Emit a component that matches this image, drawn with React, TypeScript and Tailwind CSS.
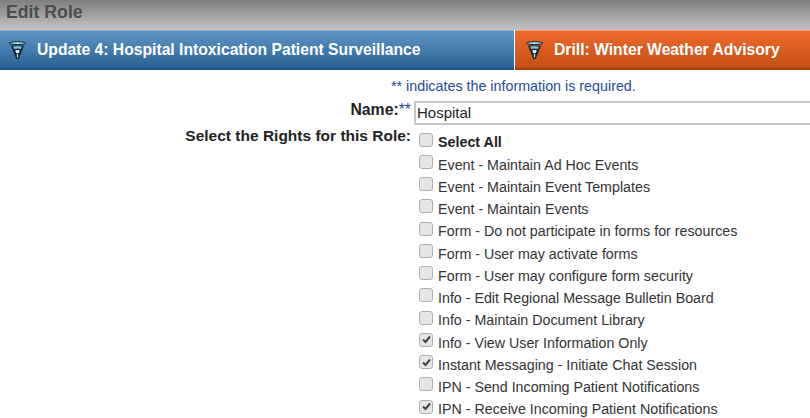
const rights = [
    { label: 'Event - Maintain Ad Hoc Events', checked: false },
    { label: 'Event - Maintain Event Templates', checked: false },
    { label: 'Event - Maintain Events', checked: false },
    { label: 'Form - Do not participate in forms for resources', checked: false },
    { label: 'Form - User may activate forms', checked: false },
    { label: 'Form - User may configure form security', checked: false },
    { label: 'Info - Edit Regional Message Bulletin Board', checked: false },
    { label: 'Info - Maintain Document Library', checked: false },
    { label: 'Info - View User Information Only', checked: true },
    { label: 'Instant Messaging - Initiate Chat Session', checked: true },
    { label: 'IPN - Send Incoming Patient Notifications', checked: false },
    { label: 'IPN - Receive Incoming Patient Notifications', checked: true },
];

function AlertIcon() {
    return (
        <svg width="19" height="20" viewBox="0 0 19 20" fill="none" className="shrink-0">
            <path d="M1 3.5 C4 1 15 1 18 3.5 C15 5 4 5 1 3.5Z" fill="#9fd6e6" stroke="#17242e" strokeWidth="1" />
            <path d="M3 5.5 L16 5.5 L11.5 17 L11 19 L8 19 L7.5 17Z" fill="#17242e" />
            <path d="M5 6.8 C7 6 12 6 14 6.8 L12.8 9 C11 8.2 8 8.2 6.2 9Z" fill="#7fc4d8" />
            <path d="M7.2 10.5 C8.5 9.9 10.5 9.9 11.8 10.5 L10.8 13 L8.2 13Z" fill="#d5eef5" />
            <path d="M9.5 13.5 V17.5" stroke="#9fd6e6" strokeWidth="1.4" />
        </svg>
    );
}

function Box({ checked }: { checked: boolean }) {
    return (
        <span className="w-[14px] h-[14px] shrink-0 mb-[7px] rounded-[3px] border border-[#b0b0b0] bg-[#e6e6e6] flex items-center justify-center">
            {checked && (
                <svg width="11" height="11" viewBox="0 0 11 11" fill="none">
                    <path d="M2 5.5 L4.5 8 L9 2.5" stroke="#444444" strokeWidth="2" />
                </svg>
            )}
        </span>
    );
}

export default function App() {
    return (
        <div className="w-[810px] h-[418px] overflow-hidden bg-white font-['Liberation_Sans',Arial,sans-serif]">
            <div className="h-[30px] px-[6px] pt-[2px] bg-gradient-to-b from-[#7f7f7f] to-[#c4c4c4] text-[17.7px] font-bold leading-[20px] text-[#4d4d4d]">
                Edit Role
            </div>

            <div className="flex h-[40px]">
                <div className="w-[514px] flex items-center gap-[10px] pl-[8px] border-t border-b-2 border-t-[#8fb3d3] border-b-[#1f5082] bg-gradient-to-b from-[#5f95c6] to-[#2a6296] text-[15.7px] font-bold text-white">
                    <AlertIcon />
                    Update 4: Hospital Intoxication Patient Surveillance
                </div>
                <div className="flex-1 ml-px flex items-center gap-[10px] pl-[10px] border-t border-b-2 border-t-[#f59a68] border-b-[#a43c0c] bg-gradient-to-b from-[#f0692c] to-[#c24f13] text-[15.7px] font-bold text-white">
                    <AlertIcon />
                    Drill: Winter Weather Advisory
                </div>
            </div>

            <p className="mt-[8px] pl-[391px] text-[14.3px] leading-[16px] text-[#1f4a9c]">
                ** indicates the information is required.
            </p>

            <div className="mt-[3px] flex items-center h-[25px]">
                <div className="w-[412px] pr-px text-right text-[15.8px] font-bold text-[#222222]">
                    Name:<span className="font-normal text-[#1f4a9c]">**</span>
                </div>
                <div className="ml-[2px] mt-[6px] flex-1 h-[24px] border-2 border-r-0 border-[#c6c6c6] pl-px text-[15px] leading-[20px] text-[#222222]">
                    Hospital
                </div>
            </div>

            <div className="flex mt-[3px]">
                <div className="w-[411px] pt-[3px] text-right text-[15.5px] font-bold leading-[16px] text-[#222222]">
                    Select the Rights for this Role:
                </div>
                <div className="pl-[8px] pt-[7px] flex flex-col">
                    <div className="h-[22.25px] flex items-center gap-[5px] text-[14.3px] font-bold text-[#222222]">
                        <Box checked={false} />
                        Select All
                    </div>
                    {rights.map((right) => (
                        <div key={right.label} className="h-[22.25px] flex items-center gap-[5px] text-[14.25px] text-[#333333]">
                            <Box checked={right.checked} />
                            {right.label}
                        </div>
                    ))}
                </div>
            </div>
        </div>
    );
}
